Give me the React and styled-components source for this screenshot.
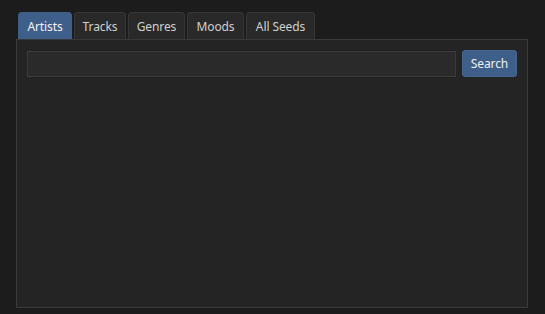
import React, { useState } from "react"
import styled, { createGlobalStyle } from "styled-components"

const GlobalStyle = createGlobalStyle`
  html, body {
    margin: 0;
    background: #1c1c1c;
    font-family: "Noto Sans", "Open Sans", sans-serif;
  }
`

const Page = styled.div`
  width: 545px;
  height: 314px;
  box-sizing: border-box;
  padding: 12px 17px 6px 16px;
  display: flex;
  flex-direction: column;
`

const TabBar = styled.div`
  display: flex;
  gap: 2px;
  padding-left: 2px;
  height: 27px;
`

const Tab = styled.button`
  height: 27px;
  width: ${(p) => p.$w}px;
  box-sizing: border-box;
  padding: 0;
  border: 1px solid ${(p) => (p.$active ? "#3d5f8a" : "#363636")};
  border-bottom: none;
  border-radius: 4px 4px 0 0;
  background: ${(p) => (p.$active ? "#3d5f8a" : "#292929")};
  color: ${(p) => (p.$active ? "#f2f2f2" : "#d0d0d0")};
  font-family: inherit;
  font-size: 12px;
  line-height: 25px;
  letter-spacing: -0.1px;
  cursor: pointer;
`

const Panel = styled.div`
  flex: 1;
  box-sizing: border-box;
  background: #242424;
  border: 1px solid #393939;
  padding: 10px 10px;
`

const SearchRow = styled.div`
  display: flex;
  align-items: center;
  gap: 6px;
`

const Input = styled.input`
  flex: 1;
  height: 26px;
  box-sizing: border-box;
  background: #2a2a2a;
  border: 1px solid #3b3b3b;
  color: #ddd;
  outline: none;
  font-family: inherit;
`

const Button = styled.button`
  height: 27px;
  width: 55px;
  box-sizing: border-box;
  border: 1px solid #46658f;
  border-radius: 3px;
  background: #3d5f8a;
  color: #f0f0f0;
  font-family: inherit;
  font-size: 12px;
  letter-spacing: -0.1px;
  padding: 0;
  cursor: pointer;
`

const tabs = [
  { name: "Artists", w: 54 },
  { name: "Tracks", w: 52 },
  { name: "Genres", w: 57 },
  { name: "Moods", w: 57 },
  { name: "All Seeds", w: 69 },
]

export default function App() {
  const [active, setActive] = useState("Artists")
  return (
    <>
      <GlobalStyle />
      <Page>
        <TabBar>
          {tabs.map((t) => (
            <Tab
              key={t.name}
              $w={t.w}
              $active={active === t.name}
              onClick={() => setActive(t.name)}
            >
              {t.name}
            </Tab>
          ))}
        </TabBar>
        <Panel>
          <SearchRow>
            <Input />
            <Button>Search</Button>
          </SearchRow>
        </Panel>
      </Page>
    </>
  )
}
